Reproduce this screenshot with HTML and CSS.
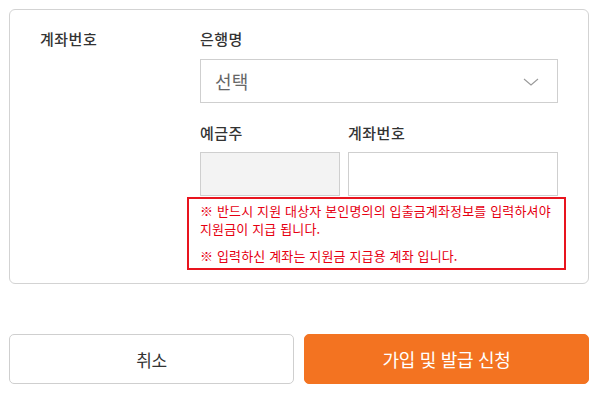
FILE: index.html
```html
<!DOCTYPE html>
<html lang="ko">
<head>
<meta charset="utf-8">
<link rel="stylesheet" href="styles.css">
</head>
<body>
<div class="page">
  <section class="card">
    <div class="row">
      <div class="row-label">계좌번호</div>
      <div class="row-body">
        <div class="field-label">은행명</div>
        <div class="select">
          <span class="select-text">선택</span>
          <svg class="chevron" width="16" height="8" viewBox="0 0 16 8"><path d="M1 1 L8 7 L15 1" fill="none" stroke="#9a9a9a" stroke-width="1.1"/></svg>
        </div>
        <div class="pair">
          <div class="pair-col owner">
            <div class="field-label">예금주</div>
            <div class="input input-disabled"></div>
          </div>
          <div class="pair-col number">
            <div class="field-label">계좌번호</div>
            <div class="input"></div>
          </div>
        </div>
        <div class="notice">
          <p class="notice-line">※ 반드시 지원 대상자 본인명의의 입출금계좌정보를 입력하셔야<br>지원금이 지급 됩니다.</p>
          <p class="notice-line">※ 입력하신 계좌는 지원금 지급용 계좌 입니다.</p>
        </div>
      </div>
    </div>
  </section>
  <div class="actions">
    <button class="btn btn-cancel">취소</button>
    <button class="btn btn-submit">가입 및 발급 신청</button>
  </div>
</div>
</body>
</html>
```
FILE: styles.css
```css
* { box-sizing: border-box; }
html, body { margin: 0; padding: 0; background: #fff; }
body {
  font-family: "Noto Sans CJK KR", "Noto Sans", sans-serif;
  color: #333;
}
.page { padding: 9px; }
.card {
  border: 1px solid #d3d3d3;
  border-radius: 6px;
  padding: 18px 30px 13px 30px;
}
.row { display: flex; }
.row-label {
  width: 160px;
  flex: none;
  font-size: 15px;
  line-height: 22px;
  font-weight: 500;
  letter-spacing: 0.5px;
  color: #333;
}
.row-body { flex: 1; }
.field-label {
  font-size: 15px;
  line-height: 22px;
  font-weight: 500;
  letter-spacing: 0.5px;
  color: #333;
  margin-bottom: 9px;
}
.select {
  height: 44px;
  border: 1px solid #cfcfcf;
  display: flex;
  align-items: center;
  justify-content: space-between;
  padding: 0 18px 0 14px;
}
.select-text {
  font-size: 18px;
  color: #666;
  letter-spacing: 0.3px;
}
.chevron { display: block; margin-top: 2px; }
.pair { display: flex; gap: 8px; margin-top: 19px; }
.pair .field-label { margin-bottom: 8px; }
.owner { width: 140px; flex: none; }
.number { flex: 1; }
.input {
  height: 44px;
  border: 1px solid #cfcfcf;
  background: #fff;
}
.input-disabled { background: #f3f3f3; }
.notice {
  margin: 1px -8px 0 -13px;
  border: 2px solid #e8141e;
  padding: 3px 4px 3px 11px;
}
.notice-line {
  margin: 0;
  font-size: 13px;
  line-height: 18px;
  color: #e60012;
  letter-spacing: 0.15px;
  white-space: nowrap;
}
.notice-line + .notice-line { margin-top: 9px; }
.actions {
  display: flex;
  gap: 10px;
  margin-top: 50px;
}
.btn {
  flex: 1;
  height: 50px;
  border-radius: 5px;
  font-family: "Noto Sans CJK KR", "Noto Sans", sans-serif;
  font-size: 18px;
  letter-spacing: -0.3px;
  cursor: pointer;
}
.btn-cancel {
  background: #fff;
  border: 1px solid #cfcfcf;
  color: #333;
  font-size: 17px;
}
.btn-submit {
  background: #f37321;
  border: 1px solid #f37321;
  color: #fff;
}
```
